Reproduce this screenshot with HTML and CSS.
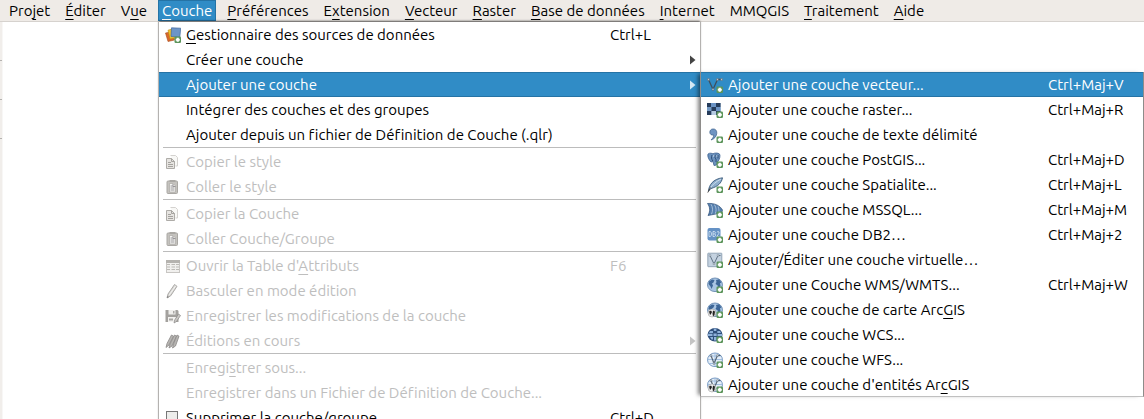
FILE: index.html
```html
<!DOCTYPE html>
<html lang="fr">
<head>
<meta charset="utf-8">
<title>QGIS</title>
<link rel="stylesheet" href="styles.css">
</head>
<body>
<svg class="sprite" aria-hidden="true">
  <defs>
    <symbol id="plus" viewBox="0 0 16 16"><rect x="9.500" y="9.500" width="6.500" height="6.500" rx="1.200" fill="#5c955b"/><path d="M12.750 10.800v4M10.800 12.750h4" stroke="#fff" stroke-width="2.200"/></symbol>
    <symbol id="sources" viewBox="0 0 16 16"><path d="M.5 6 8 4.500 9.500 13 3 14.500z" fill="#d9682c" stroke="#a84c1c" stroke-width=".6"/><path d="M3 3.200 9 1.500 12 10.500 5 12z" fill="#f2c22e" stroke="#b98a10" stroke-width=".6"/><path d="M6.500.8 15.700 1.200 14.800 10.200 6 9.500z" fill="#6d95c8" stroke="#41699e" stroke-width=".7"/><use href="#plus"/></symbol>
    <symbol id="copy" viewBox="0 0 16 16"><path d="M5.500 1.500h5l2 2v8.500h-2" fill="#f8f8f6" stroke="#d4d2cf"/><path d="M1.500 4.500h5l3 3v7h-8z" fill="#e6e4e1" stroke="#aeaca8"/><path d="M6.500 4.500v3h3M3 8.500h3M3 10.500h5M3 12.500h5" fill="none" stroke="#a5a39f"/></symbol>
    <symbol id="paste" viewBox="0 0 16 16"><rect x="2" y="2" width="10.500" height="12.500" rx="1" fill="#c4c2be" stroke="#aaa8a4"/><path d="M4.500 1h6v2h-6z" fill="#aaa8a4"/><path d="M4.500 4.500h3.500l2.500 2.500v6h-6z" fill="#f6f6f4" stroke="#aaa8a4" stroke-width=".7"/><path d="M5.500 7H8M5.500 9h4M5.500 11h4M8 5v2.500h2.500" fill="none" stroke="#99979a"/></symbol>
    <symbol id="table" viewBox="0 0 16 16"><rect x="1.500" y="2.500" width="13" height="12" fill="#f1f0ee" stroke="#c8c6c3"/><path d="M1 2h14v3H1z" fill="#b5b3af"/><path d="M2 6.500h3M2 9h3M2 11.500h3M6.500 6.500h3.500M6.500 9h3.500M6.500 11.500h3.500M11 6.500h3M11 9h3M11 11.500h3" stroke="#bcbab6" stroke-width="1.200"/></symbol>
    <symbol id="pencil" viewBox="0 0 16 16"><path d="M2 15l1-4L9.500 1.500l2.500 1.800L5.700 12.800z" fill="#d8d7d4" stroke="#a5a3a0" stroke-width=".9"/><path d="M4.300 11.800 10.800 2.700" stroke="#f4f4f2"/><path d="M2 15l.5-2 1.500 1z" fill="#777"/></symbol>
    <symbol id="save" viewBox="0 0 16 16"><path d="M.5 2h12l1 1v11H.5z" fill="#a3a19e"/><path d="M3.500 2h7v4.500h-7z" fill="#efeeec"/><path d="M3 9h8v5H3z" fill="#f3f2f0"/><path d="M8 3h1.500v2.500H8zM4 10.500h4v2H4z" fill="#aaa8a5"/><path d="M9 15l.7-3L13.500 6l2 1.500L11.500 13.500z" fill="#cbc9c6" stroke="#8a8886" stroke-width=".7"/></symbol>
    <symbol id="pencils" viewBox="0 0 16 16"><g fill="#b7b5b2" stroke="#8a8886" stroke-width=".8"><path d="M1 14.500l1-4L6.500 2l2 1.200L4 12z"/><path d="M4 15l1-4 4.500-9 2 1.200L7 13z"/><path d="M7.500 15l1-4 3.500-9 2 1.200L10.500 13z"/></g></symbol>
    <symbol id="vector" viewBox="0 0 16 16"><path d="M1.500 2.500 6 12.500 10.500 2.500h4" fill="none" stroke="#3f505e" stroke-width="1.300"/><g fill="#d5dfe6" stroke="#4a5d6c" stroke-width=".5"><path d="M.6 1.600h1.800v1.800H.6zM5.100 11.500h1.800v1.800H5.100zM9.500 1.600h1.800v1.800H9.500zM13.700 1.600h1.800v1.800h-1.800z"/></g><use href="#plus"/></symbol>
    <symbol id="raster" viewBox="0 0 16 16"><path d="M0 1h13.500v12H0z" fill="#7398c2"/><path d="M0 1h4v4H0zM9 1h4.500v4H9zM4.500 5H9v4H4.500zM0 9h4.500v4H0zM9 9h4.500v4H9z" fill="#263c5b"/><path d="M4 1h5v4H4zM9 5h4.500v4H9z" fill="#6b93c4"/><path d="M4.500 9H9v4H4.500z" fill="#b6cbe2"/><use href="#plus"/></symbol>
    <symbol id="comma" viewBox="0 0 16 16"><path d="M5.500 2C8 1.500 10 3.200 9.800 6.200 9.600 9.200 7.500 12 4 13c2-2 2.800-3.500 2.700-5C4.500 8.500 2.800 7.200 2.800 5.200 2.800 3.500 4 2.200 5.500 2z" fill="#6e94c2" stroke="#3e618d" stroke-width=".7"/><use href="#plus"/></symbol>
    <symbol id="postgis" viewBox="0 0 16 16"><path d="M1 2C3 .5 5 1.500 6 1.800 7.500.8 11 .7 12.500 2c1 1.600.3 5-1.500 7.500L10 9.800 9.500 13 7 13.500 6 9.500 4 10C2 8 .2 4.500 1 2z" fill="#6a91bd" stroke="#3c6190" stroke-width=".8"/><path d="M5 3c-1 2-.5 4 .8 6M9 2.500c-1.500 1.500-1.500 3.500 0 4.500v3M11 3v3.500" fill="none" stroke="#2f5079"/><path d="M6.200 4h1M9.500 4h.8" stroke="#fff"/><use href="#plus"/></symbol>
    <symbol id="feather" viewBox="0 0 16 16"><path d="M1.500 14C2 8 6 2 15.500.8 14.500 6 11 9.500 4 11.500z" fill="#8eaecd" stroke="#385878" stroke-width=".9"/><path d="M3 11.500C5 8 9 4.500 14 2" fill="none" stroke="#dbe7f2" stroke-width=".8"/><path d="M.8 15.500 3.500 10.500" stroke="#444"/><use href="#plus"/></symbol>
    <symbol id="mssql" viewBox="0 0 16 16"><path d="M.5 1.500C7 1 13 3 15.800 8.500L14 11 1 13.500C3.500 9 3 5 .5 1.500z" fill="#557fae" stroke="#2f5079" stroke-width=".7"/><path d="M4 2.200c2 3.500 2 6.500.5 10M7.500 2.800c2 3 2 6 .7 9M11 4.500c1.200 2.500 1.200 4.500.5 7" fill="none" stroke="#b7cbe1" stroke-width=".8"/><use href="#plus"/></symbol>
    <symbol id="db2" viewBox="0 0 16 16"><rect x=".5" y="1" width="13" height="12.500" rx="2" fill="#6592c5"/><path d="M2 4.500v5h1.200q1.300-.3 1.300-2.500T3.200 4.500zM6 4.500v5h1.400q1.200-.2 1.200-1.400 0-1-1-1.200 .8-.3.8-1.200 0-1.200-1.200-1.200zM6 7h1.500M9.800 5.300q1.200-1.500 2.300-.3.400 1-2.300 4.500h2.700" fill="none" stroke="#dbe8f5" stroke-width=".8"/><use href="#plus"/></symbol>
    <symbol id="virtual" viewBox="0 0 16 16"><rect x=".8" y="1.200" width="14" height="13.500" rx=".5" fill="#c4d2e0" stroke="#8195a9" stroke-width=".8"/><path d="M3 3.500 7 12 11 3.500h2.500" fill="none" stroke="#607285"/><path d="M2.200 2.700h1.600v1.600H2.200zM10.200 2.700h1.600v1.600h-1.600zM6.200 11h1.600v1.600H6.200z" fill="#fff" stroke="#607285" stroke-width=".5"/><use href="#plus"/></symbol>
    <symbol id="globe" viewBox="0 0 16 16"><ellipse cx="8" cy="7.800" rx="7.500" ry="6.800" fill="#a9c5e3" stroke="#5b7fa8" stroke-width=".8"/><path d="M2 4.500 5 2.500 7.500 3 6.500 5.500 5 6.500 6 8.500 4.500 12 3.500 9.500 1.500 7zM9 3l3-.8 2.500 3.300-1.500.7.500 2.800-2 2.500-1-3.200L8.500 7 9.500 5z" fill="#3d6697"/></symbol>
    <symbol id="wms" viewBox="0 0 16 16"><use href="#globe"/><use href="#plus"/></symbol>
    <symbol id="arc" viewBox="0 0 16 16"><circle cx="5" cy="11" r="4" fill="#f2f2f2" stroke="#888" stroke-width=".5"/><path d="M2 9.500 4 8.500l1 1.500L4 12l-1 1zM6 8.500l2 1-.5 3.500L6 14.500l-.5-3z" fill="#222"/></symbol>
    <symbol id="arcmap" viewBox="0 0 16 16"><use href="#globe"/><use href="#arc"/><use href="#plus"/></symbol>
    <symbol id="wcs" viewBox="0 0 16 16"><ellipse cx="8" cy="7.800" rx="7.500" ry="6.800" fill="#2f4f7b"/><path d="M3 4h3v2H2zM6.800 1.500h2.600V4H6.800zM10.300 4H13l1 2h-3.700zM6.500 6.500h3.200v2.500H6.500zM1 6.800h4.500V9H1zM3 10h3v2.500H4.500zM10.500 7h4.500v2h-4.500zM7 10h2.500v3.500H7z" fill="#8fb2db"/><use href="#plus"/></symbol>
    <symbol id="grid-globe" viewBox="0 0 16 16"><ellipse cx="8" cy="7.800" rx="7.500" ry="6.800" fill="#e4eef8" stroke="#6d92bd" stroke-width=".9"/><path d="M.8 7.500h14.400M2.200 4h11.600M2.200 11.500h11.600M8 1v13.500" stroke="#8fb2da" stroke-width=".8"/><path d="M4 3.500 7 11.500 10.500 3.500h3" fill="none" stroke="#51606f" stroke-width="1.100"/><path d="M3.200 2.700h1.600v1.600H3.200zM9.700 2.700h1.600v1.600H9.700zM6.200 10.500h1.600v1.600H6.200z" fill="#fff" stroke="#51606f" stroke-width=".5"/></symbol>
    <symbol id="wfs" viewBox="0 0 16 16"><use href="#grid-globe"/><use href="#plus"/></symbol>
    <symbol id="arcfeat" viewBox="0 0 16 16"><use href="#grid-globe"/><use href="#arc"/><use href="#plus"/></symbol>
    <symbol id="box" viewBox="0 0 16 16"><rect x="1.500" y="1.500" width="11" height="11" fill="#ededeb" stroke="#777"/></symbol>
    <symbol id="arrow" viewBox="0 0 6 10"><path d="M0 .5 5.500 5 0 9.500z" fill="currentColor"/></symbol>
  </defs>
</svg>

<nav class="menubar">
  <ul class="menubar-list">
    <li><button class="top">Pro<u>j</u>et</button></li>
    <li><button class="top"><u>É</u>diter</button></li>
    <li><button class="top">V<u>u</u>e</button></li>
    <li class="open"><button class="top top-active"><u>C</u>ouche</button>
      <ul class="menu menu-main">
        <li><button class="item"><svg class="icon"><use href="#sources"/></svg><span class="label"><u>G</u>estionnaire des sources de données</span><span class="keys">Ctrl+L</span></button></li>
        <li><button class="item"><span class="icon"></span><span class="label">Créer une couche</span><svg class="arrow"><use href="#arrow"/></svg></button></li>
        <li class="open"><button class="item item-active"><span class="icon"></span><span class="label">Ajouter une couche</span><svg class="arrow"><use href="#arrow"/></svg></button>
          <ul class="menu menu-sub">
            <li><button class="item item-active"><svg class="icon"><use href="#vector"/></svg><span class="label">Ajouter une couche vecteur...</span><span class="keys">Ctrl+Maj+V</span></button></li>
            <li><button class="item"><svg class="icon"><use href="#raster"/></svg><span class="label">Ajouter une couche raster...</span><span class="keys">Ctrl+Maj+R</span></button></li>
            <li><button class="item"><svg class="icon"><use href="#comma"/></svg><span class="label">Ajouter une couche de texte délimité</span></button></li>
            <li><button class="item"><svg class="icon"><use href="#postgis"/></svg><span class="label">Ajouter une couche PostGIS...</span><span class="keys">Ctrl+Maj+D</span></button></li>
            <li><button class="item"><svg class="icon"><use href="#feather"/></svg><span class="label">Ajouter une couche Spatialite...</span><span class="keys">Ctrl+Maj+L</span></button></li>
            <li><button class="item"><svg class="icon"><use href="#mssql"/></svg><span class="label">Ajouter une couche MSSQL...</span><span class="keys">Ctrl+Maj+M</span></button></li>
            <li><button class="item"><svg class="icon"><use href="#db2"/></svg><span class="label">Ajouter une couche DB2…</span><span class="keys">Ctrl+Maj+2</span></button></li>
            <li><button class="item"><svg class="icon"><use href="#virtual"/></svg><span class="label">Ajouter/Éditer une couche virtuelle…</span></button></li>
            <li><button class="item"><svg class="icon"><use href="#wms"/></svg><span class="label">Ajouter une Couche WMS/WMTS...</span><span class="keys">Ctrl+Maj+W</span></button></li>
            <li><button class="item"><svg class="icon"><use href="#arcmap"/></svg><span class="label">Ajouter une couche de carte Arc<u>G</u>IS</span></button></li>
            <li><button class="item"><svg class="icon"><use href="#wcs"/></svg><span class="label">Ajouter une couche WCS...</span></button></li>
            <li><button class="item"><svg class="icon"><use href="#wfs"/></svg><span class="label">Ajouter une couche WFS...</span></button></li>
            <li><button class="item item-last"><svg class="icon"><use href="#arcfeat"/></svg><span class="label">Ajouter une couche d'entités Ar<u>c</u>GIS</span></button></li>
          </ul>
        </li>
        <li><button class="item"><span class="icon"></span><span class="label">Intégrer des couches et des groupes</span></button></li>
        <li><button class="item"><span class="icon"></span><span class="label">Ajouter depuis un fichier de Définition de Couche (.qlr)</span></button></li>
        <li class="separator"></li>
        <li><button class="item" disabled><svg class="icon"><use href="#copy"/></svg><span class="label">Copier le style</span></button></li>
        <li><button class="item" disabled><svg class="icon"><use href="#paste"/></svg><span class="label">Coller le style</span></button></li>
        <li class="separator"></li>
        <li><button class="item" disabled><svg class="icon"><use href="#copy"/></svg><span class="label">Copier la Couche</span></button></li>
        <li><button class="item" disabled><svg class="icon"><use href="#paste"/></svg><span class="label">Coller Couche/Groupe</span></button></li>
        <li class="separator"></li>
        <li><button class="item" disabled><svg class="icon"><use href="#table"/></svg><span class="label">Ouvrir la Table d'<u>A</u>ttributs</span><span class="keys">F6</span></button></li>
        <li><button class="item" disabled><svg class="icon"><use href="#pencil"/></svg><span class="label">Basculer en mode édition</span></button></li>
        <li><button class="item" disabled><svg class="icon"><use href="#save"/></svg><span class="label">Enregistrer les modifications de la couche</span></button></li>
        <li><button class="item" disabled><svg class="icon"><use href="#pencils"/></svg><span class="label">Éditions en cours</span><svg class="arrow"><use href="#arrow"/></svg></button></li>
        <li class="separator"></li>
        <li><button class="item" disabled><span class="icon"></span><span class="label">Enregi<u>s</u>trer sous...</span></button></li>
        <li><button class="item" disabled><span class="icon"></span><span class="label">Enregistrer dans un Fichier de Définition de Couche...</span></button></li>
        <li><button class="item"><svg class="icon"><use href="#box"/></svg><span class="label">Supprimer la couche/groupe</span><span class="keys">Ctrl+D</span></button></li>
      </ul>
    </li>
    <li><button class="top"><u>P</u>références</button></li>
    <li><button class="top">E<u>x</u>tension</button></li>
    <li><button class="top"><u>V</u>ecteur</button></li>
    <li><button class="top"><u>R</u>aster</button></li>
    <li><button class="top"><u>B</u>ase de données</button></li>
    <li><button class="top"><u>I</u>nternet</button></li>
    <li><button class="top">MMQGIS</button></li>
    <li><button class="top"><u>T</u>raitement</button></li>
    <li><button class="top"><u>A</u>ide</button></li>
  </ul>
</nav>
<main class="workspace">
  <div class="toolstrip"><div class="tool"></div><div class="tool"></div><div class="tool"></div></div>
</main>
</body>
</html>
```

FILE: styles.css
```css
* { box-sizing: border-box; }

body {
  margin: 0;
  height: 100vh;
  overflow: hidden;
  display: flex;
  flex-direction: column;
  background: #fff;
  color: #000;
  font: 15px/20px "Ubuntu", "Noto Sans", sans-serif;
  font-variant-ligatures: none;
}

ul { list-style: none; margin: 0; padding: 0; }

button {
  font: inherit;
  font-variant-ligatures: inherit;
  color: inherit;
  background: none;
  border: 0;
  margin: 0;
  padding: 0;
  text-align: left;
}

u { text-decoration-thickness: 1px; text-underline-offset: 3px; }

.sprite { position: absolute; width: 0; height: 0; }

.menubar {
  background: #efebe7;
  border-bottom: 1px solid #d6d2ce;
}

.menubar-list { display: flex; gap: 7px; padding-left: 5px; }

.top {
  display: block;
  height: 21px;
  padding: 0 4px;
  white-space: nowrap;
}

.top-active { background: #308cc6; color: #fff; box-shadow: inset 0 0 0 1px #2573a5; }

.open { position: relative; }

.menu {
  position: absolute;
  background: #fff;
  color: #000;
}

.menu-main {
  top: 100%;
  left: 0;
  width: 543px;
  margin-top: 1px;
  border: 1px solid #b4b2b0;
  border-top: 0;
  box-shadow: 0 -2px 2px -1px rgba(0, 0, 0, .6);
  z-index: 1;
}

.menu-sub {
  top: 0;
  left: 100%;
  width: 444px;
  border: 1px solid #8e8c8a;
  border-top: 0;
  border-bottom-color: #c0c0c0;
  box-shadow: -4px 0 4px -2px rgba(0, 0, 0, .5);
}

.item {
  display: flex;
  align-items: center;
  gap: 5px;
  width: 100%;
  height: 25px;
  padding: 1px 4px 0 6px;
  white-space: nowrap;
}

.item-last { height: 24px; }
.item:disabled { color: #bebebe; }
.item-active { background: #308cc6; color: #fff; box-shadow: inset 0 1px #2573a5, inset 0 -1px #2573a5; }

.icon { width: 16px; height: 16px; flex: none; }
.label { flex: 1; }
.keys { width: 86px; }
.menu-sub .keys { width: 91px; }

.arrow { width: 6px; height: 10px; color: #444; }
.item-active .arrow { color: #d5e8f4; }
.item:disabled .arrow { color: #c4c4c4; }

.separator { height: 2px; margin: 0 4px; border-top: 1px solid #bcbcbc; }

.workspace { flex: 1; display: flex; }
.toolstrip { width: 3px; background: #f1eeeb; border-right: 1px solid #f8f7f6; }
.tool { height: 39px; border-bottom: 1px solid #b5b3b0; }
```
